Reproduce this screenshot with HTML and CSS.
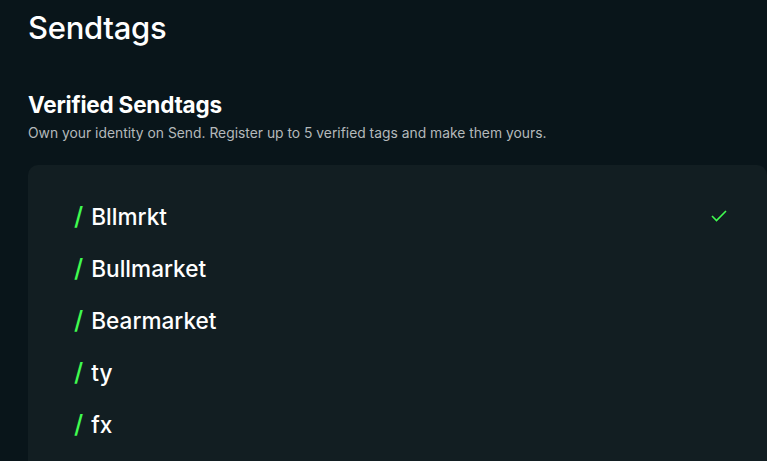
FILE: index.html
```html
<!DOCTYPE html>
<html>
<head>
<meta charset="utf-8">
<link rel="stylesheet" href="styles.css">
</head>
<body>
<main class="page">
  <h1 class="title">Sendtags</h1>
  <section class="section">
    <h2 class="heading">Verified Sendtags</h2>
    <p class="sub">Own your identity on Send. Register up to 5 verified tags and make them yours.</p>
    <div class="card">
      <ul class="tags">
        <li class="tag"><span class="slash">/</span><span class="name">Bllmrkt</span>
          <svg class="check" width="16" height="12" viewBox="0 0 16 12"><path d="M1 6l4.5 4.5L15 1" fill="none" stroke="#40fb50" stroke-width="1.6"/></svg>
        </li>
        <li class="tag"><span class="slash">/</span><span class="name">Bullmarket</span></li>
        <li class="tag"><span class="slash">/</span><span class="name">Bearmarket</span></li>
        <li class="tag"><span class="slash">/</span><span class="name">ty</span></li>
        <li class="tag"><span class="slash">/</span><span class="name">fx</span></li>
      </ul>
    </div>
  </section>
</main>
</body>
</html>
```

FILE: styles.css
```css
* { box-sizing: border-box; }
html, body { margin: 0; padding: 0; }
body {
  background: #09151a;
  color: #ffffff;
  font-family: Inter, "Liberation Sans", sans-serif;
  overflow: hidden;
  height: 461px;
}
.page {
  padding: 8px 0 0 28px;
}
.title {
  margin: 0;
  font-size: 31px;
  font-weight: 500;
  line-height: 40px;
  letter-spacing: -0.3px;
}
.section {
  margin-top: 43px;
}
.heading {
  margin: 0;
  font-size: 22.5px;
  font-weight: 700;
  line-height: 28px;
  letter-spacing: -0.2px;
}
.sub {
  margin: 6px 0 0;
  font-size: 13.85px;
  line-height: 16px;
  color: #b4b9bb;
}
.card {
  margin-top: 24px;
  background: #121e22;
  border-radius: 10px 10px 0 0;
  padding: 35px 40px 0 46px;
  height: 296px;
  overflow: hidden;
}
.tags {
  list-style: none;
  margin: 0;
  padding: 0;
  display: flex;
  flex-direction: column;
  gap: 20px;
}
.tag {
  display: flex;
  align-items: center;
  height: 32px;
  font-size: 22.6px;
  font-weight: 500;
}
.slash {
  color: #40fb50;
  font-weight: 500;
  font-size: 25px;
  margin-right: 8px;
}
.name { flex: 1; }
.check { display: block; }
```
